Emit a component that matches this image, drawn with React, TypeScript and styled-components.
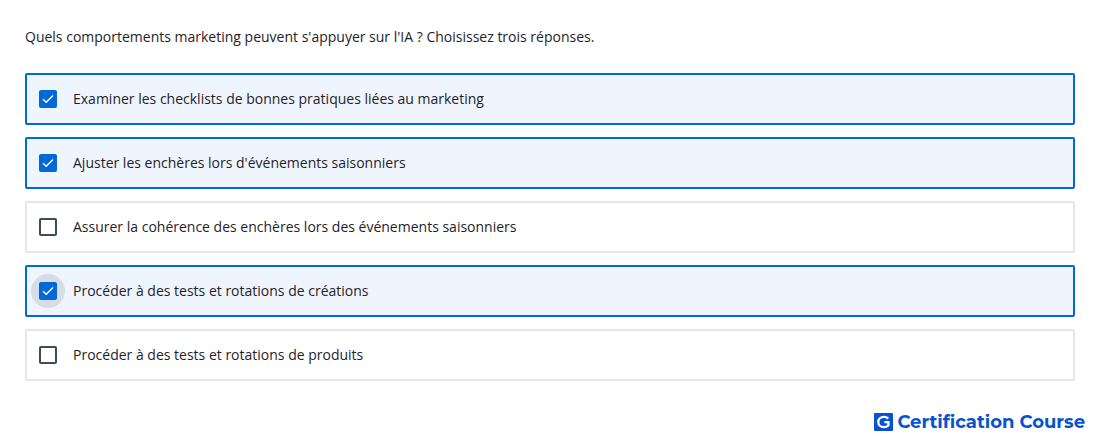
import React, { useState } from "react";
import styled, { createGlobalStyle } from "styled-components";

const GlobalStyle = createGlobalStyle`
  *, *::before, *::after { box-sizing: border-box; }
  body {
    margin: 0;
    background: #ffffff;
    color: #1f2328;
    font-family: "Open Sans", "Noto Sans", sans-serif;
    font-size: 14px;
    line-height: 20px;
  }
`;

const Page = styled.main`
  padding: 27px 25px 0;
`;

const Quiz = styled.fieldset`
  margin: 0;
  padding: 0;
  border: 0;
  min-width: 0;
`;

const Question = styled.legend`
  padding: 0;
  margin-bottom: 26px;
`;

const Options = styled.div`
  display: flex;
  flex-direction: column;
  gap: 12px;
`;

const Option = styled.label<{ $selected: boolean }>`
  display: flex;
  align-items: center;
  gap: 16px;
  padding: 14px 12px;
  border: 2px solid ${(p) => (p.$selected ? "#0068d9" : "#e5e7e8")};
  border-radius: 2px;
  background: ${(p) => (p.$selected ? "#eff5ff" : "#ffffff")};
  cursor: pointer;
`;

const CheckWrap = styled.span<{ $active: boolean }>`
  position: relative;
  display: grid;
  flex: none;
  width: 18px;
  height: 18px;

  &::before {
    content: "";
    display: ${(p) => (p.$active ? "block" : "none")};
    position: absolute;
    inset: -8px;
    border-radius: 50%;
    background: #d7dce6;
  }
`;

const Checkbox = styled.input`
  grid-area: 1 / 1;
  position: relative;
  appearance: none;
  width: 18px;
  height: 18px;
  margin: 0;
  border: 2px solid #404b5a;
  border-radius: 2px;
  background: #ffffff;
  outline: none;
  cursor: pointer;

  &:checked {
    border-color: #0068d9;
    background: #0068d9;
  }
`;

const Tick = styled.svg`
  grid-area: 1 / 1;
  position: relative;
  width: 18px;
  height: 18px;
  pointer-events: none;
`;

const Brand = styled.footer`
  display: flex;
  justify-content: flex-end;
  align-items: center;
  gap: 4px;
  padding: 29px 15px 0 0;
  color: #0753cf;
`;

const BrandName = styled.span`
  font-family: Montserrat, Inter, sans-serif;
  font-size: 18px;
  font-weight: 700;
  line-height: 24px;
`;

const answers = [
  "Examiner les checklists de bonnes pratiques liées au marketing",
  "Ajuster les enchères lors d'événements saisonniers",
  "Assurer la cohérence des enchères lors des événements saisonniers",
  "Procéder à des tests et rotations de créations",
  "Procéder à des tests et rotations de produits",
];

export default function App() {
  const [selected, setSelected] = useState([true, true, false, true, false]);
  const [active, setActive] = useState(3);

  const toggle = (index: number) => {
    setSelected((prev) => prev.map((v, i) => (i === index ? !v : v)));
    setActive(index);
  };

  return (
    <>
      <GlobalStyle />
      <Page>
        <Quiz>
          <Question>
            Quels comportements marketing peuvent s'appuyer sur l'IA ? Choisissez trois réponses.
          </Question>
          <Options>
            {answers.map((answer, i) => (
              <Option key={answer} $selected={selected[i]} htmlFor={`answer-${i}`}>
                <CheckWrap $active={active === i}>
                  <Checkbox
                    id={`answer-${i}`}
                    type="checkbox"
                    checked={selected[i]}
                    onChange={() => toggle(i)}
                  />
                  {selected[i] && (
                    <Tick viewBox="0 0 18 18" aria-hidden="true">
                      <path d="M4 9.2 7.2 12.3 14 5.4" fill="none" stroke="#fff" strokeWidth="1.4" />
                    </Tick>
                  )}
                </CheckWrap>
                <span>{answer}</span>
              </Option>
            ))}
          </Options>
        </Quiz>
      </Page>
      <Brand>
        <svg width="19" height="18" viewBox="0 0 19 18" aria-hidden="true">
          <rect width="19" height="18" rx="1" fill="#0753cf" />
          <path
            d="M14.2 5.6C13 4.4 11.6 3.9 9.9 3.9C6.6 3.9 4.3 6 4.3 9C4.3 12 6.6 14.1 9.8 14.1C11.5 14.1 13.3 13.5 14.4 12.5V9.2H10.4"
            fill="none"
            stroke="#fff"
            strokeWidth="2.3"
          />
        </svg>
        <BrandName>Certification Course</BrandName>
      </Brand>
    </>
  );
}
